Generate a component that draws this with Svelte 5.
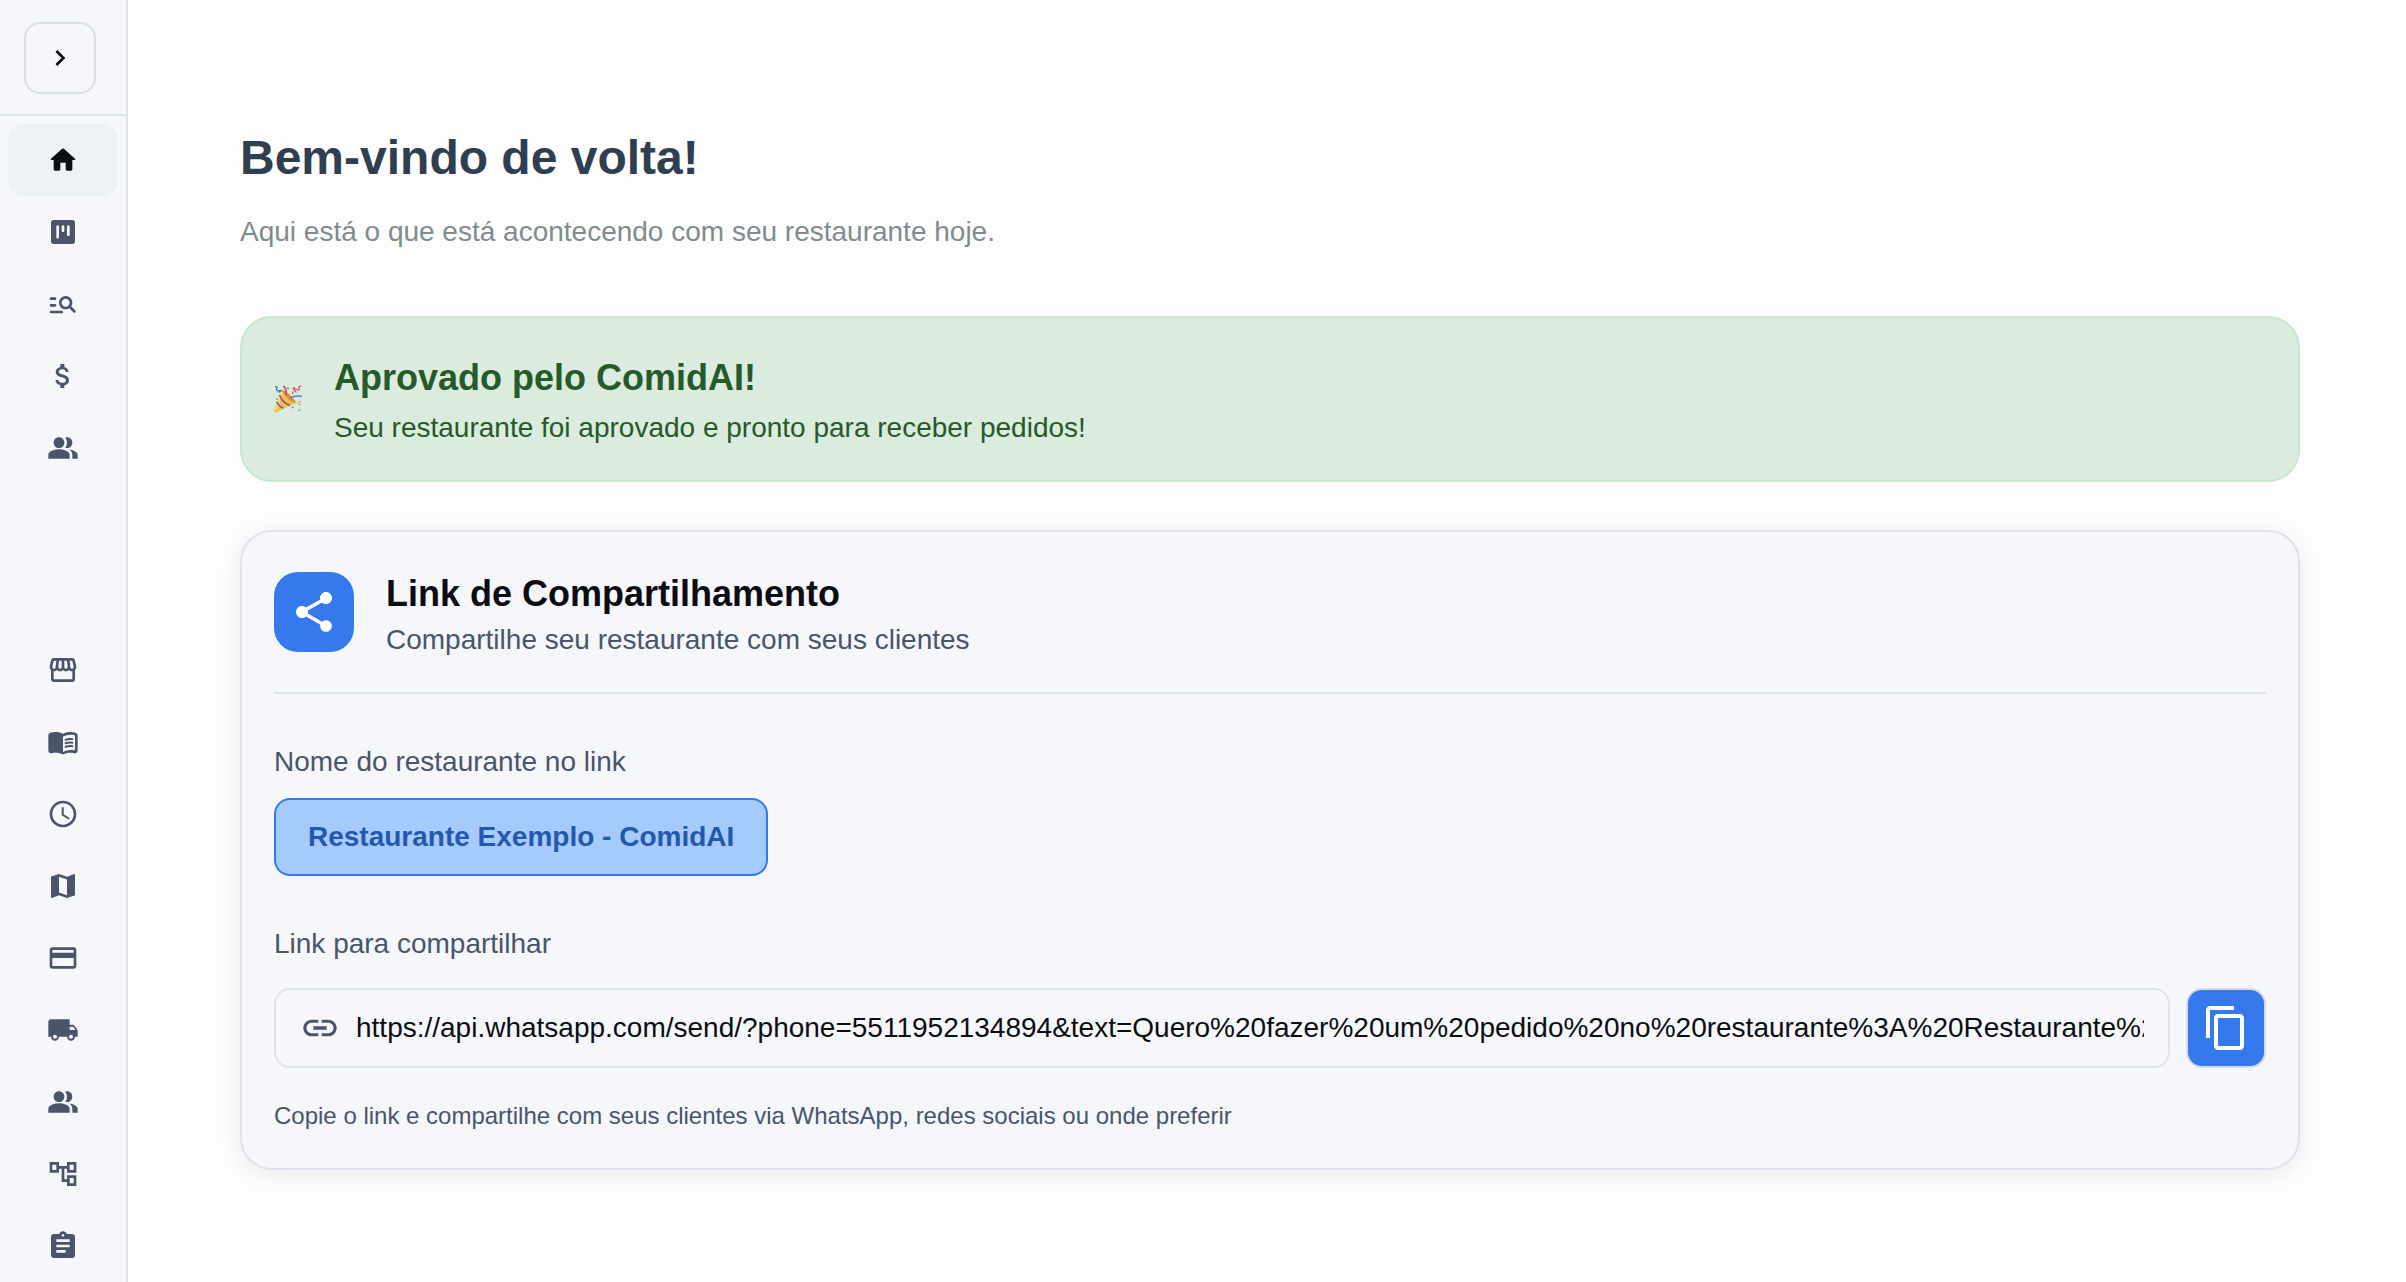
<script>
	const home = 'M10 19v-5h4v5c0 .55.45 1 1 1h3c.55 0 1-.45 1-1v-7h1.7c.46 0 .68-.57.33-.87L12.67 3.6c-.38-.34-.96-.34-1.34 0l-8.36 7.53c-.34.3-.13.87.33.87H5v7c0 .55.45 1 1 1h3c.55 0 1-.45 1-1z';
	const people = 'M16.67 13.13C18.04 14.06 19 15.32 19 17v3h4v-3c0-2.18-3.57-3.47-6.33-3.87zM15 12c2.21 0 4-1.79 4-4s-1.79-4-4-4c-.47 0-.91.1-1.33.24C14.5 5.27 15 6.58 15 8s-.5 2.73-1.33 3.76c.42.14.86.24 1.33.24zM9 12c2.21 0 4-1.79 4-4s-1.79-4-4-4-4 1.79-4 4 1.79 4 4 4zM9 13c-2.67 0-8 1.34-8 4v3h16v-3c0-2.66-5.33-4-8-4z';

	const mainNav = [
		{ label: 'Início', path: home, active: true },
		{ label: 'Quadro', path: 'M19 3H5c-1.1 0-2 .9-2 2v14c0 1.1.9 2 2 2h14c1.1 0 2-.9 2-2V5c0-1.1-.9-2-2-2zM8 17c-.55 0-1-.45-1-1V8c0-.55.45-1 1-1s1 .45 1 1v8c0 .55-.45 1-1 1zm4-5c-.55 0-1-.45-1-1V8c0-.55.45-1 1-1s1 .45 1 1v3c0 .55-.45 1-1 1zm4 3c-.55 0-1-.45-1-1V8c0-.55.45-1 1-1s1 .45 1 1v6c0 .55-.45 1-1 1z' },
		{ label: 'Buscar pedidos', path: 'M6 9H3c-.55 0-1-.45-1-1s.45-1 1-1h3c.55 0 1 .45 1 1s-.45 1-1 1zm0 3H3c-.55 0-1 .45-1 1s.45 1 1 1h3c.55 0 1-.45 1-1s-.45-1-1-1zm13.88 6.29-3.12-3.12c-.8.52-1.74.83-2.76.83-2.76 0-5-2.24-5-5s2.24-5 5-5 5 2.24 5 5c0 1.02-.31 1.96-.83 2.75l3.12 3.13c.39.39.39 1.02 0 1.41s-1.02.39-1.41 0zM17 11c0-1.65-1.35-3-3-3s-3 1.35-3 3 1.35 3 3 3 3-1.35 3-3zM3 19h8c.55 0 1-.45 1-1s-.45-1-1-1H3c-.55 0-1 .45-1 1s.45 1 1 1z' },
		{ label: 'Financeiro', path: 'M11.8 10.9c-2.27-.59-3-1.2-3-2.15 0-1.09 1.01-1.85 2.7-1.85 1.78 0 2.44.85 2.5 2.1h2.21c-.07-1.72-1.12-3.3-3.21-3.81V3h-3v2.16c-1.94.42-3.5 1.68-3.5 3.61 0 2.31 1.91 3.46 4.7 4.13 2.5.6 3 1.48 3 2.41 0 .69-.49 1.79-2.7 1.79-2.06 0-2.87-.92-2.98-2.1h-2.2c.12 2.19 1.76 3.42 3.68 3.83V21h3v-2.15c1.95-.37 3.5-1.5 3.5-3.55 0-2.84-2.43-3.81-4.7-4.4z' },
		{ label: 'Clientes', path: people }
	];

	const settingsNav = [
		{ label: 'Loja', path: 'M21.9 8.89l-1.05-4.37c-.22-.9-1-1.52-1.91-1.52H5.05c-.9 0-1.69.63-1.9 1.52L2.1 8.89c-.24 1.02-.02 2.06.62 2.88.08.11.19.19.28.29V19c0 1.1.9 2 2 2h14c1.1 0 2-.9 2-2v-6.94c.09-.09.2-.18.28-.28.64-.82.87-1.87.62-2.89zM18.91 4.99l1.05 4.37c.1.42.01.84-.25 1.17-.14.18-.44.47-.94.47-.61 0-1.14-.49-1.21-1.14L16.98 5l1.93-.01zM13 5h1.96l.54 4.52c.05.39-.07.78-.33 1.07-.22.26-.54.41-.95.41-.67 0-1.22-.59-1.22-1.31V5zM8.49 9.52L9.04 5H11v4.69c0 .72-.55 1.31-1.29 1.31-.34 0-.65-.15-.89-.41-.25-.29-.37-.68-.33-1.07zM4.04 9.36L5.05 5h1.97l-.58 4.86c-.08.65-.6 1.14-1.21 1.14-.49 0-.8-.29-.93-.47-.27-.32-.36-.75-.26-1.17zM5 19v-6.03c.08.01.15.03.23.03.87 0 1.66-.36 2.24-.95.6.6 1.4.95 2.31.95.87 0 1.65-.36 2.23-.93.59.57 1.39.93 2.29.93.84 0 1.64-.35 2.24-.95.58.59 1.37.95 2.24.95.08 0 .15-.02.23-.03V19H5z' },
		{ label: 'Cardápio', path: 'M17.5 4.5c-1.95 0-4.05.4-5.5 1.5-1.45-1.1-3.55-1.5-5.5-1.5-1.45 0-2.99.22-4.28.79C1.49 5.62 1 6.33 1 7.14v11.28c0 1.3 1.22 2.26 2.48 1.94.98-.25 2.02-.36 3.02-.36 1.56 0 3.22.26 4.56.92.6.3 1.28.3 1.87 0 1.34-.67 3-.92 4.56-.92 1 0 2.04.11 3.02.36 1.26.33 2.48-.63 2.48-1.94V7.14c0-.81-.49-1.52-1.22-1.85-1.28-.57-2.82-.79-4.27-.79zM21 17.23c0 .63-.58 1.09-1.2.98-.75-.14-1.53-.2-2.3-.2-1.7 0-4.15.65-5.5 1.5V8c1.35-.85 3.8-1.5 5.5-1.5.92 0 1.83.09 2.7.28.46.1.8.51.8.98v9.47zM13.98 11.01c-.32 0-.61-.2-.71-.52-.13-.39.09-.82.48-.94 1.54-.5 3.53-.66 5.36-.45.41.05.71.42.66.83-.05.41-.42.71-.83.66-1.62-.19-3.39-.04-4.73.39-.08.01-.16.03-.23.03zM13.98 13.67c-.32 0-.61-.2-.71-.52-.13-.39.09-.82.48-.94 1.53-.5 3.53-.66 5.36-.45.41.05.71.42.66.83-.05.41-.42.71-.83.66-1.62-.19-3.39-.04-4.73.39-.08.02-.16.03-.23.03zM13.98 16.33c-.32 0-.61-.2-.71-.52-.13-.39.09-.82.48-.94 1.53-.5 3.53-.66 5.36-.45.41.05.71.42.66.83-.05.41-.42.7-.83.66-1.62-.19-3.39-.04-4.73.39-.08.02-.16.03-.23.03z' },
		{ label: 'Horários', path: 'M11.99 2C6.47 2 2 6.48 2 12s4.47 10 9.99 10C17.52 22 22 17.52 22 12S17.52 2 11.99 2zM12 20c-4.42 0-8-3.58-8-8s3.58-8 8-8 8 3.58 8 8-3.58 8-8 8zM12.5 7H11v6l5.25 3.15.75-1.23-4.5-2.67z' },
		{ label: 'Área de entrega', path: 'M20.5 3l-.16.03L15 5.1 9 3 3.36 4.9c-.21.07-.36.25-.36.48V20.5c0 .28.22.5.5.5l.16-.03L9 18.9l6 2.1 5.64-1.9c.21-.07.36-.25.36-.48V3.5c0-.28-.22-.5-.5-.5zM15 19l-6-2.11V5l6 2.11V19z' },
		{ label: 'Pagamentos', path: 'M20 4H4c-1.11 0-1.99.89-1.99 2L2 18c0 1.11.89 2 2 2h16c1.11 0 2-.89 2-2V6c0-1.11-.89-2-2-2zm0 14H4v-6h16v6zm0-10H4V6h16v2z' },
		{ label: 'Entregas', path: 'M20 8h-3V4H3c-1.1 0-2 .9-2 2v11h2c0 1.66 1.34 3 3 3s3-1.34 3-3h6c0 1.66 1.34 3 3 3s3-1.34 3-3h2v-5l-3-4zM6 18.5c-.83 0-1.5-.67-1.5-1.5s.67-1.5 1.5-1.5 1.5.67 1.5 1.5-.67 1.5-1.5 1.5zm13.5-9l1.96 2.5H17V9.5h2.5zm-1.5 9c-.83 0-1.5-.67-1.5-1.5s.67-1.5 1.5-1.5 1.5.67 1.5 1.5-.67 1.5-1.5 1.5z' },
		{ label: 'Equipe', path: people },
		{ label: 'Integrações', path: 'M22 11V3h-7v3H9V3H2v8h7V8h2v10h4v3h7v-8h-7v3h-2V8h2v3h7zM7 9H4V5h3v4zm10 6h3v4h-3v-4zm0-10h3v4h-3V5z' },
		{ label: 'Relatórios', path: 'M19 3h-4.18C14.4 1.84 13.3 1 12 1s-2.4.84-2.82 2H5c-1.1 0-2 .9-2 2v14c0 1.1.9 2 2 2h14c1.1 0 2-.9 2-2V5c0-1.1-.9-2-2-2zm-7 0c.55 0 1 .45 1 1s-.45 1-1 1-1-.45-1-1 .45-1 1-1zm2 14H7v-2h7v2zm3-4H7v-2h10v2zm0-4H7V7h10v2z' }
	];

	let shareLink = $state('https://api.whatsapp.com/send/?phone=5511952134894&text=Quero%20fazer%20um%20pedido%20no%20restaurante%3A%20Restaurante%20Exemplo%20-%20ComidAI');
	let expanded = $state(false);

	function copyLink() {
		navigator.clipboard?.writeText(shareLink);
	}
</script>

{#snippet icon(path)}
	<svg viewBox="0 0 24 24" aria-hidden="true"><path d={path} /></svg>
{/snippet}

{#snippet navList(items)}
	<ul>
		{#each items as item}
			<li>
				<a href="#{item.label}" class="nav-item" class:active={item.active} aria-label={item.label}>
					{@render icon(item.path)}
				</a>
			</li>
		{/each}
	</ul>
{/snippet}

<div class="layout">
	<aside class="sidebar">
		<div class="sidebar-head">
			<button class="toggle" aria-label="Expandir menu" aria-expanded={expanded} onclick={() => (expanded = !expanded)}>
				{@render icon('M10 6 8.59 7.41 13.17 12l-4.58 4.59L10 18l6-6z')}
			</button>
		</div>
		<nav>
			{@render navList(mainNav)}
			{@render navList(settingsNav)}
		</nav>
	</aside>

	<main>
		<header>
			<h1>Bem-vindo de volta!</h1>
			<p>Aqui está o que está acontecendo com seu restaurante hoje.</p>
		</header>

		<section class="approved">
			<svg class="party" viewBox="0 0 30 30" aria-hidden="true">
				<path d="M8 5 0 26q-1 4 3 3L24 19Q18 9 8 5z" fill="#edc044" />
				<path d="M9 5q0 4 5 9t10 5Q18 9 9 5z" fill="#cf9632" />
				<path d="M8 5 0 26l2 2L10 9z" fill="#f8dc72" />
				<path d="M6 11q3 8 11 11M3 18q2 5 7 7" fill="none" stroke="#8e44cf" stroke-width="1.8" />
				<path d="M13 11q1-6-3-10" fill="none" stroke="#e0475c" stroke-width="1.8" />
				<path d="M17 14q5-3 13-2" fill="none" stroke="#4a7fe0" stroke-width="1.6" />
				<path d="M1 2q3-1 2 2t3 2-1 2M14 3l2 1" fill="none" stroke="#3f6fce" stroke-width="1.4" />
				<path d="M29 1q-3 0-2 3t-4 0 1 4M20 7v3" fill="none" stroke="#d4566c" stroke-width="1.4" />
				<path d="M25 20q3 0 3 2M26 18h3" fill="none" stroke="#dba45a" stroke-width="1.4" />
				<circle cx="3" cy="15" r="1" fill="#e06a7a" />
				<circle cx="20" cy="24" r="1" fill="#4a7fe0" />
				<circle cx="27" cy="27" r="1" fill="#cf76c4" />
			</svg>
			<div class="approved-text">
				<h2>Aprovado pelo ComidAI!</h2>
				<p>Seu restaurante foi aprovado e pronto para receber pedidos!</p>
			</div>
		</section>

		<section class="card">
			<div class="card-head">
				<div class="share-icon">
					{@render icon('M18 16.08c-.76 0-1.44.3-1.96.77L8.91 12.7c.05-.23.09-.46.09-.7s-.04-.47-.09-.7l7.05-4.11c.54.5 1.25.81 2.04.81 1.66 0 3-1.34 3-3s-1.34-3-3-3-3 1.34-3 3c0 .24.04.47.09.7L8.04 9.81C7.5 9.31 6.79 9 6 9c-1.66 0-3 1.34-3 3s1.34 3 3 3c.79 0 1.5-.31 2.04-.81l7.12 4.16c-.05.21-.08.43-.08.65 0 1.61 1.31 2.92 2.92 2.92s2.92-1.31 2.92-2.92-1.31-2.92-2.92-2.92z')}
				</div>
				<div>
					<h2>Link de Compartilhamento</h2>
					<p>Compartilhe seu restaurante com seus clientes</p>
				</div>
			</div>

			<p class="label">Nome do restaurante no link</p>
			<div class="chip">Restaurante Exemplo - ComidAI</div>

			<label class="label" for="share-link">Link para compartilhar</label>
			<div class="link-row">
				<div class="link-box">
					{@render icon('M3.9 12c0-1.71 1.39-3.1 3.1-3.1h4V7H7c-2.76 0-5 2.24-5 5s2.24 5 5 5h4v-1.9H7c-1.71 0-3.1-1.39-3.1-3.1zM8 13h8v-2H8v2zm9-6h-4v1.9h4c1.71 0 3.1 1.39 3.1 3.1s-1.39 3.1-3.1 3.1h-4V17h4c2.76 0 5-2.24 5-5s-2.24-5-5-5z')}
					<input id="share-link" type="text" readonly value={shareLink} />
				</div>
				<button class="copy" aria-label="Copiar link" onclick={copyLink}>
					{@render icon('M16 1H4c-1.1 0-2 .9-2 2v14h2V3h12V1zm3 4H8c-1.1 0-2 .9-2 2v14c0 1.1.9 2 2 2h11c1.1 0 2-.9 2-2V7c0-1.1-.9-2-2-2zm0 16H8V7h11v14z')}
				</button>
			</div>
			<p class="hint">Copie o link e compartilhe com seus clientes via WhatsApp, redes sociais ou onde preferir</p>
		</section>
	</main>
</div>

<style>
:global(body) { background: #fdfdfd; font-family: "Liberation Sans", Arial, sans-serif; color: #0b0d12; }

h1, h2, p, ul { margin: 0; padding: 0; }
ul { list-style: none; }
svg { display: block; fill: currentColor; flex: none; }
button { padding: 0; cursor: pointer; color: inherit; }

.layout { display: flex; min-height: 100vh; }

/* Sidebar */
.sidebar {
	width: 128px; flex: none; box-sizing: border-box;
	display: flex; flex-direction: column;
	background: #f5f7fb; border-right: 2px solid #e0e2eb;
}
.sidebar-head { padding: 22px 24px 20px; border-bottom: 2px solid #e0e2eb; }
.toggle {
	width: 72px; height: 72px; box-sizing: border-box;
	display: grid; place-items: center;
	background: transparent; border: 2px solid #dcdee7; border-radius: 16px;
}
.toggle svg { width: 32px; height: 32px; }
nav { flex: 1; display: flex; flex-direction: column; justify-content: space-between; padding: 8px 8px 0; }
.nav-item {
	height: 72px; display: grid; place-items: center;
	border-radius: 16px; color: #4a546b;
}
.nav-item.active { background: #edf1f4; color: #0b0d12; }
.nav-item svg { width: 32px; height: 32px; }

/* Content */
main { flex: 1; min-width: 0; padding: 128px 106px 64px 112px; }
header { margin-bottom: 64px; }
h1 { font-size: 48px; line-height: 60px; color: #2f3e50; }
header p { margin-top: 24px; font-size: 28px; line-height: 40px; color: #7f8c8d; }

.approved {
	display: flex; align-items: center; gap: 32px;
	padding: 32px; margin-bottom: 48px;
	background: #d9ecdd; border: 2px solid #c8e6cc; border-radius: 32px;
	color: #27592a;
}
.approved-text { padding-top: 6px; }
.party { width: 28px; height: 28px; }
h2 { font-size: 36px; line-height: 44px; }
.approved p { margin-top: 8px; font-size: 28px; line-height: 40px; }

.card {
	padding: 40px 32px 36px; background: #f5f7fb;
	border: 2px solid #e0e2eb; border-radius: 32px;
	box-shadow: 0 4px 24px rgba(0,0,0,0.08);
}
.card-head {
	display: flex; align-items: flex-start; gap: 32px;
	padding-bottom: 32px; margin-bottom: 48px; border-bottom: 2px solid #e0e2eb;
}
.card-head p { margin-top: 4px; font-size: 28px; line-height: 40px; }
.card-head p, .label, .hint { color: #4a546b; }
.share-icon {
	width: 80px; height: 80px; display: grid; place-items: center;
	background: #3679ec; border-radius: 24px; color: #fff;
}
.share-icon svg { width: 48px; height: 48px; }

.label { display: block; font-size: 28px; line-height: 40px; }
.chip {
	width: fit-content; padding: 16px 32px; margin: 16px 0 48px;
	background: #a4cbfb; border: 2px solid #3679ec; border-radius: 16px;
	font-size: 28px; font-weight: 700; line-height: 42px; color: #2458ae;
}
.link-row { display: flex; gap: 16px; margin: 24px 0 32px; }
.link-box {
	flex: 1; min-width: 0; display: flex; align-items: center; gap: 16px;
	padding: 0 24px; border: 2px solid #e0e2eb; border-radius: 16px; color: #4a546b;
}
.link-box svg { width: 40px; height: 40px; }
.link-box input {
	flex: 1; min-width: 0; padding: 0; border: none; background: transparent; outline: none;
	font-family: inherit; font-size: 28px; line-height: 40px; color: #0b0d12;
}
.copy {
	width: 80px; height: 80px; box-sizing: border-box;
	display: grid; place-items: center;
	background: #3679ec; border: 2px solid #d7dbe4; border-radius: 16px; color: #fff;
}
.copy svg { width: 48px; height: 48px; }
.hint { font-size: 24px; line-height: 32px; }
</style>
